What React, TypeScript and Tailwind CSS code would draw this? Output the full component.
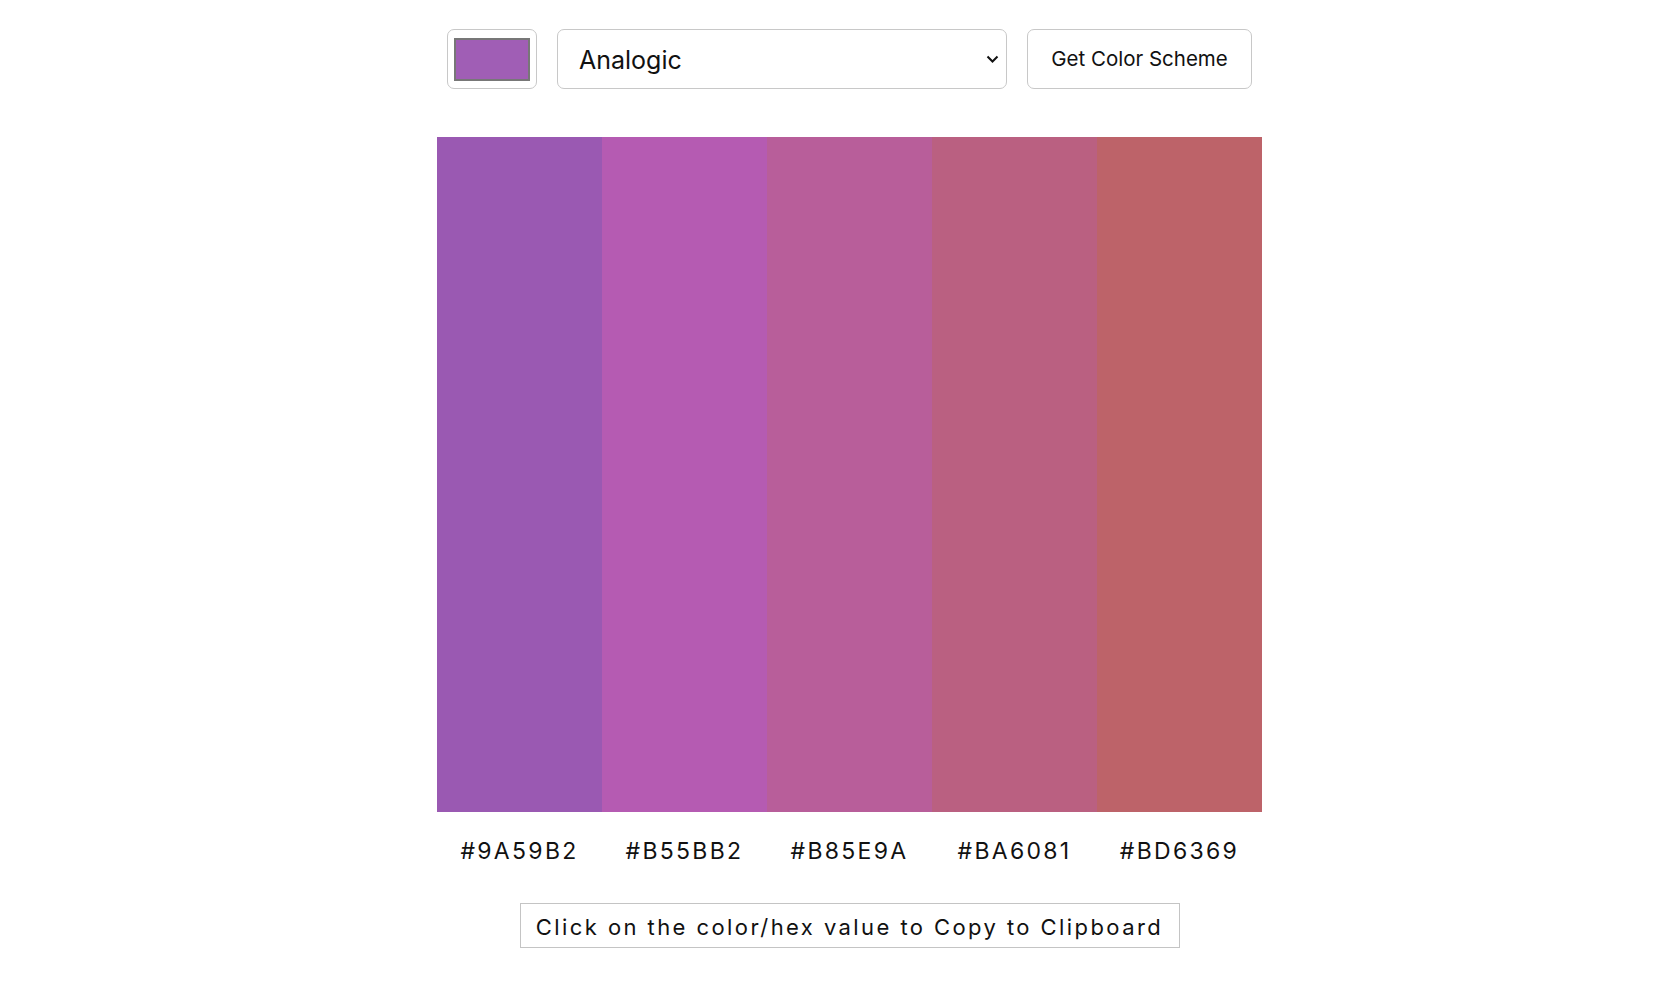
import React from "react";

const colors = ["#9A59B2", "#B55BB2", "#B85E9A", "#BA6081", "#BD6369"];

export default function App() {
  return (
    <div className="min-h-screen bg-white flex flex-col items-center pl-[37px] pt-[29px] text-[#111]" style={{ fontFamily: "Inter, sans-serif" }}>
      <div className="flex gap-[20px] h-[60px]">
        <div className="w-[90px] h-[60px] border border-[#c8c8c8] rounded-[7px] flex items-center justify-center">
          <div className="w-[76px] h-[43px] bg-[#A05EB5] border-2 border-[#777]" />
        </div>
        <div className="relative w-[450px] h-[60px] border border-[#c8c8c8] rounded-[7px] flex items-center pl-[21px] pt-[3px]">
          <span className="text-[25px] text-[#111]">Analogic</span>
          <svg className="absolute right-[7px] top-[25px]" width="13" height="8" viewBox="0 0 13 8">
            <path d="M1.5 1.5 L6.5 6.5 L11.5 1.5" fill="none" stroke="#111" strokeWidth="2" />
          </svg>
        </div>
        <button className="w-[225px] h-[60px] border border-[#c8c8c8] rounded-[7px] bg-white text-[20.5px] text-[#111]">
          Get Color Scheme
        </button>
      </div>
      <div className="mt-[48px] flex w-[825px] h-[675px]">
        {colors.map((c) => (
          <div key={c} className="flex-1" style={{ backgroundColor: c }} />
        ))}
      </div>
      <div className="mt-[28px] flex w-[825px] h-[22px]">
        {colors.map((c) => (
          <div key={c} className="flex-1 text-center text-[23px] leading-[22px] tracking-[0.1em]">
            {c}
          </div>
        ))}
      </div>
      <div className="mt-[41px] w-[660px] h-[45px] border border-[#c4c4c4] flex items-center justify-center pt-[3px]">
        <span className="text-[22px] tracking-[0.11em]">
          Click on the color/hex value to Copy to Clipboard
        </span>
      </div>
    </div>
  );
}
